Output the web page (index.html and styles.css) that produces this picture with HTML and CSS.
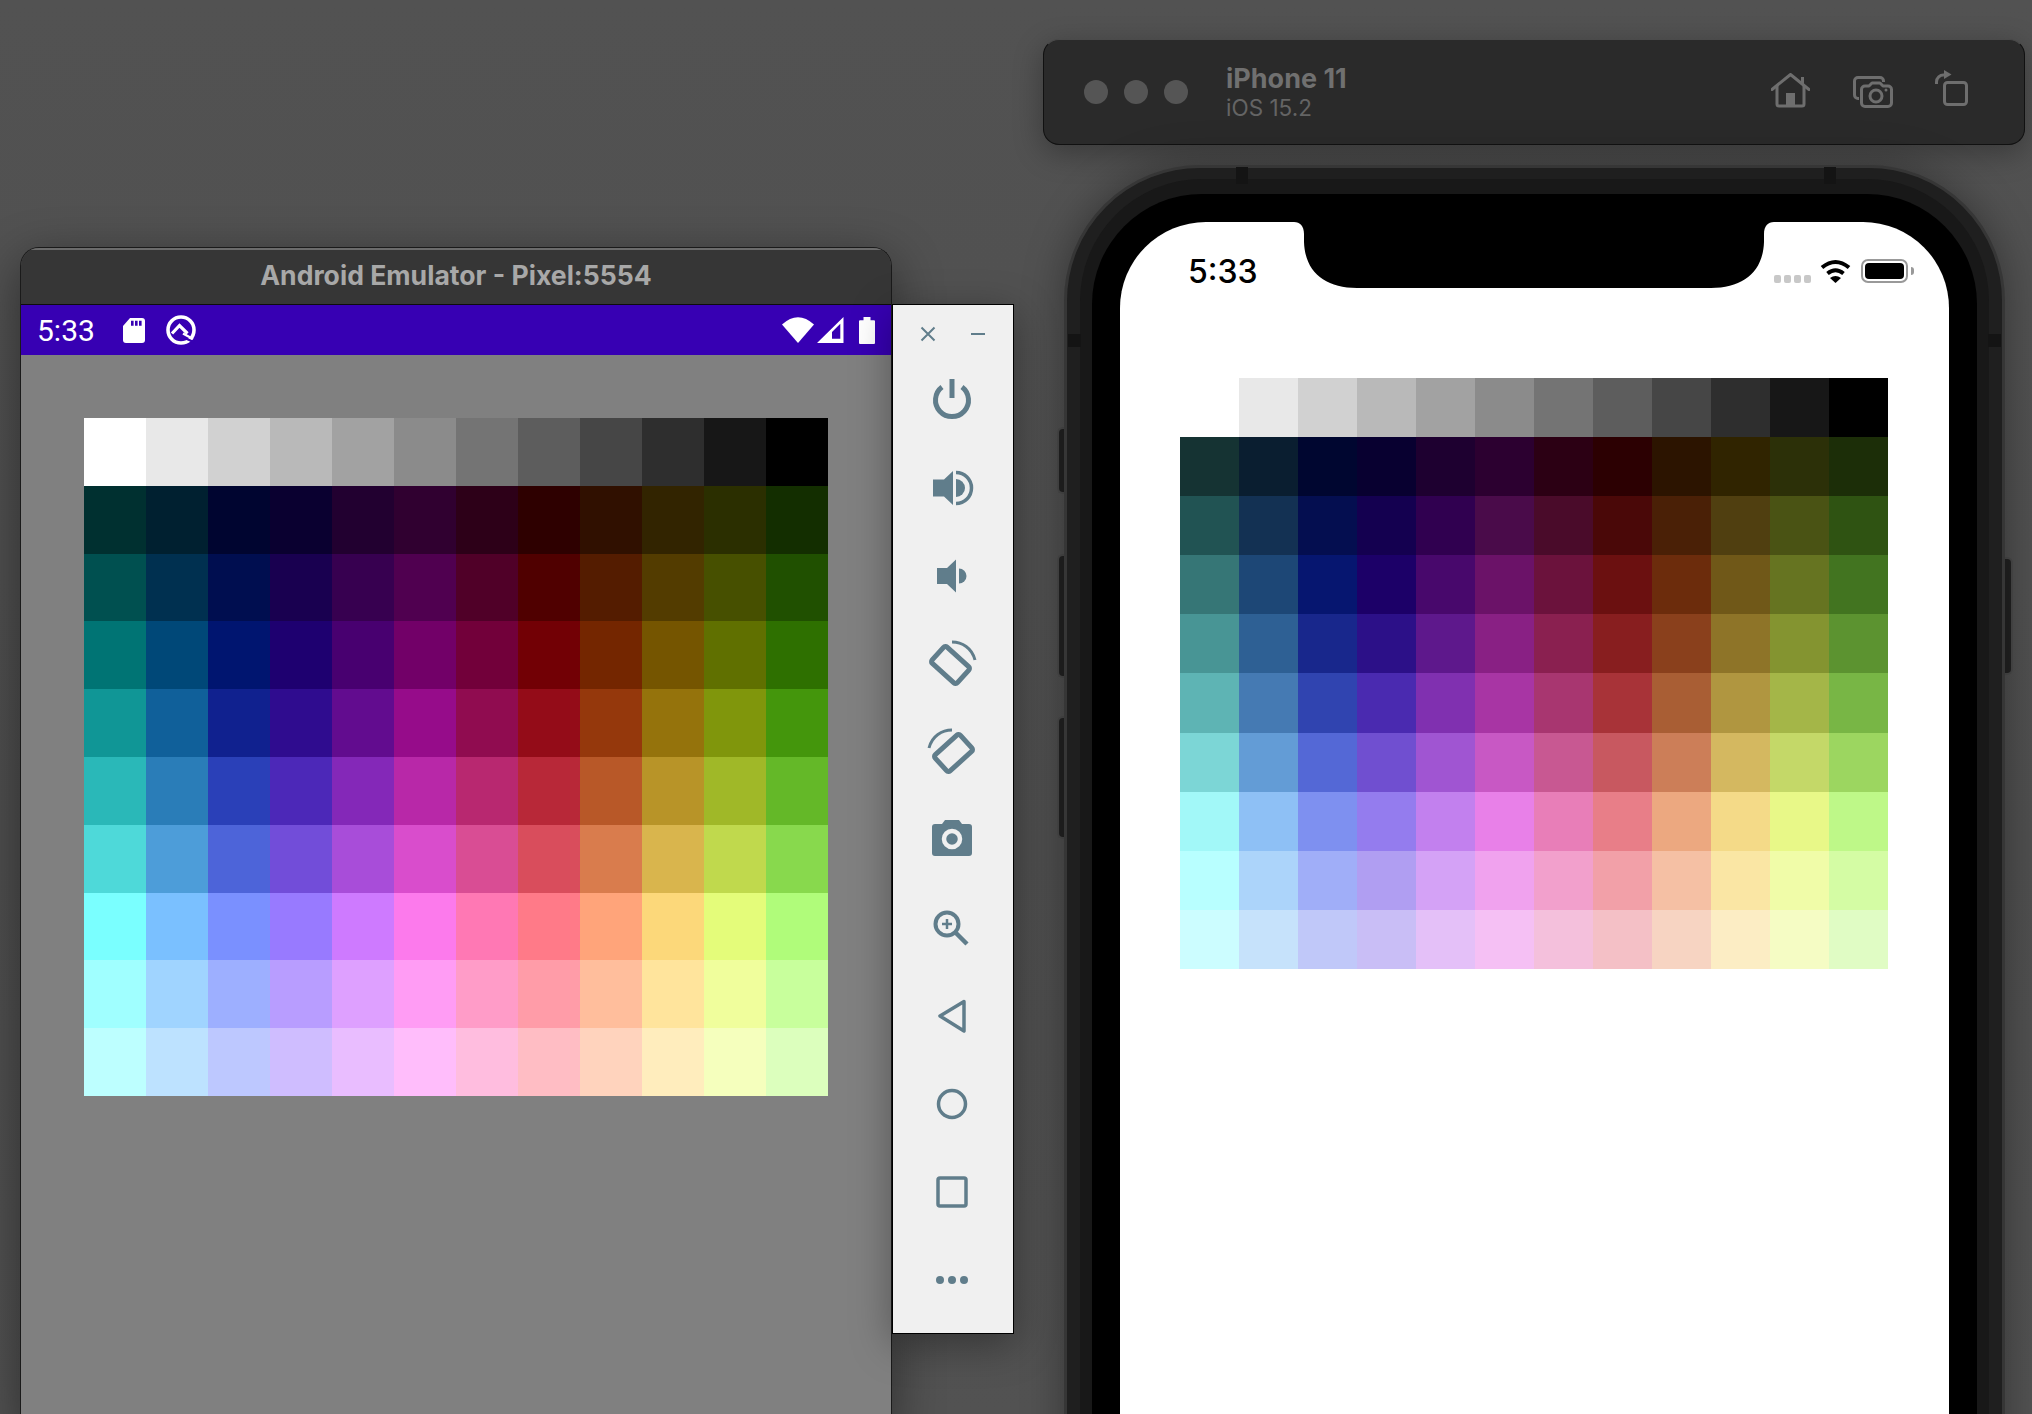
FILE: index.html
```html
<!DOCTYPE html>
<html lang="en">
<head>
  <meta charset="UTF-8">
  <meta name="viewport" content="width=device-width, initial-scale=1.0">
  <title>Android Emulator and iOS Simulator</title>
  <link rel="stylesheet" href="styles.css">
</head>
<body>

  <!-- Android emulator window -->
  <div class="android-window">
    <div class="title-bar">Android Emulator - Pixel:5554</div>
    <div class="android-status">
      <span class="android-time">5:33</span>
      <svg class="sd-icon" width="22" height="25" viewBox="0 0 22 25">
        <path fill="#fff" d="M7 0H19a3 3 0 0 1 3 3V22a3 3 0 0 1-3 3H3a3 3 0 0 1-3-3V8Z"/>
        <path fill="#3700b3" d="M8 2.7h2.6v5H8zM12 2.7h2.6v5H12zM16 2.7h2.6v5H16z"/>
      </svg>
      <svg class="q-icon" width="30" height="30" viewBox="0 0 30 30">
        <circle cx="15" cy="15" r="13" fill="none" stroke="#fff" stroke-width="3.6"/>
        <path fill="none" stroke="#fff" stroke-width="3.2" d="M6 18.5 13.5 10.5 21.5 18.5"/>
        <path fill="none" stroke="#3700b3" stroke-width="2.4" d="M14 21 30 28"/>
        <path fill="none" stroke="#fff" stroke-width="2.4" d="M17 18.5 27 24"/>
      </svg>
      <span class="status-spacer"></span>
      <svg width="32" height="26" viewBox="0 0 32 26">
        <path fill="#fff" d="M0 7.5Q16-7 32 7.5L16 26Z"/>
      </svg>
      <svg class="signal-icon" width="27" height="26" viewBox="0 0 27 26">
        <path fill="#fff" fill-rule="evenodd" d="M26.500 0V26H0ZM15 21.700H23.300V6.700L15 15Z"/>
      </svg>
      <svg class="battery-icon" width="16" height="27" viewBox="0 0 16 27">
        <path fill="#fff" d="M4.500 0h7v3.300h3.500a1 1 0 0 1 1 1V26a1 1 0 0 1-1 1H1a1 1 0 0 1-1-1V4.300a1 1 0 0 1 1-1h3.500Z"/>
      </svg>
    </div>
    <div class="android-screen">
      <div class="swatches android-swatches" id="androidSwatches"></div>
    </div>
  </div>

  <!-- Emulator side controls -->
  <div class="tool-panel">
    <div class="tool-top">
      <svg width="16" height="16" viewBox="0 0 16 16"><path class="line" stroke-width="2" d="M1.500 1.500 14.500 14.500M14.500 1.500 1.500 14.500"/></svg>
      <svg width="16" height="16" viewBox="0 0 16 16"><path class="line" stroke-width="2" d="M1 8H15"/></svg>
    </div>
    <div class="tool-btn">
      <svg class="nudge-up" width="48" height="48" viewBox="0 0 48 48">
        <path class="line" stroke-width="5" d="M14 13A16.500 16.500 0 1 0 34 13"/>
        <path class="line" stroke-width="5" d="M24 5V24"/>
      </svg>
    </div>
    <div class="tool-btn">
      <svg width="48" height="48" viewBox="0 0 48 48">
        <path class="fill" d="M5 15.500H16L25 7V41L16 32.500H5Z"/>
        <path class="fill" d="M28 15a9 9 0 0 1 0 18Z"/>
        <path class="line" stroke-width="3.500" d="M28 8.500a15.500 15.500 0 0 1 0 31"/>
      </svg>
    </div>
    <div class="tool-btn">
      <svg width="48" height="48" viewBox="0 0 48 48">
        <path class="fill" d="M9 16H19L28 7.500V40.500L19 32H9Z"/>
        <path class="fill" d="M31 16.500a7.500 7.500 0 0 1 0 15Z"/>
      </svg>
    </div>
    <div class="tool-btn">
      <svg width="52" height="52" viewBox="0 0 52 52">
        <rect class="line" x="7.500" y="16" width="34" height="22" rx="2.500" stroke-width="5" transform="rotate(42 24.500 27)"/>
        <path class="line" stroke-width="3" d="M26 4C36 4 46 10 49 22"/>
      </svg>
    </div>
    <div class="tool-btn">
      <svg class="flip" width="52" height="52" viewBox="0 0 52 52">
        <rect class="line" x="7.500" y="16" width="34" height="22" rx="2.500" stroke-width="5" transform="rotate(42 24.500 27)"/>
        <path class="line" stroke-width="3" d="M26 4C36 4 46 10 49 22"/>
      </svg>
    </div>
    <div class="tool-btn">
      <svg class="nudge-up" width="48" height="48" viewBox="0 0 48 48">
        <path class="fill" d="M7 10H14L17 6H31L34 10H41a3 3 0 0 1 3 3V39a3 3 0 0 1-3 3H7a3 3 0 0 1-3-3V13a3 3 0 0 1 3-3Z"/>
        <circle cx="24" cy="25" r="8" fill="none" stroke="#f0f0f0" stroke-width="4.500"/>
      </svg>
    </div>
    <div class="tool-btn">
      <svg width="48" height="48" viewBox="0 0 48 48">
        <circle class="line" cx="19" cy="20" r="11.500" stroke-width="4"/>
        <path class="line" stroke-width="2.500" d="M14 20H24M19 15V25"/>
        <path class="line" stroke-width="4.500" d="M28 29 39 40"/>
      </svg>
    </div>
    <div class="tool-btn">
      <svg width="48" height="48" viewBox="0 0 48 48">
        <path class="line" stroke-width="3.500" stroke-linejoin="round" d="M36 9.500 12 24 36 39Z"/>
      </svg>
    </div>
    <div class="tool-btn">
      <svg width="48" height="48" viewBox="0 0 48 48">
        <circle class="line" cx="24" cy="24" r="13.500" stroke-width="3.500"/>
      </svg>
    </div>
    <div class="tool-btn">
      <svg width="48" height="48" viewBox="0 0 48 48">
        <rect class="line" x="10" y="10" width="28" height="28" rx="2" stroke-width="3.500"/>
      </svg>
    </div>
    <div class="tool-btn">
      <svg width="48" height="48" viewBox="0 0 48 48">
        <circle class="fill" cx="12" cy="24" r="4"/>
        <circle class="fill" cx="24" cy="24" r="4"/>
        <circle class="fill" cx="36" cy="24" r="4"/>
      </svg>
    </div>
  </div>

  <!-- iOS simulator toolbar -->
  <div class="sim-toolbar">
    <div class="lights">
      <span class="light"></span>
      <span class="light"></span>
      <span class="light"></span>
    </div>
    <div class="sim-name">
      <div class="sim-device">iPhone 11</div>
      <div class="sim-os">iOS 15.2</div>
    </div>
    <svg class="home-icon" width="39" height="35" viewBox="0 0 39 35">
      <path class="sim-line" stroke-linecap="round" stroke-linejoin="round" d="M1 16.500 19.500 1.500 38 16.500"/>
      <path class="sim-line" stroke-linejoin="round" d="M6 12V31a2 2 0 0 0 2 2H31a2 2 0 0 0 2-2V12M31.500 12V4"/>
      <path fill="#6e6e6e" d="M15 20H24V33H15Z"/>
    </svg>
    <svg class="shot-icon" width="40" height="32" viewBox="0 0 40 32">
      <path class="sim-line" d="M6 22.500H5a3.500 3.500 0 0 1-3.500-3.500V5A3.500 3.500 0 0 1 5 1.500H27A3.500 3.500 0 0 1 30.500 5V6"/>
      <path class="sim-line" stroke-linejoin="round" d="M12 10H16L19 7H27L30 10H35A3.500 3.500 0 0 1 38.500 13.500V27A3.500 3.500 0 0 1 35 30.500H12A3.500 3.500 0 0 1 8.500 27V13.500A3.500 3.500 0 0 1 12 10Z"/>
      <circle class="sim-line" cx="23" cy="20" r="6"/>
      <circle fill="#6e6e6e" cx="33" cy="14" r="1.500"/>
    </svg>
    <svg class="rotate-icon" width="33" height="36" viewBox="0 0 33 36">
      <rect class="sim-line" x="9.500" y="12.500" width="22" height="22" rx="3"/>
      <path class="sim-line" d="M1.500 14V12A7 7 0 0 1 9 5"/>
      <path fill="#6e6e6e" d="M9 0 16.500 4.500 9 9Z"/>
    </svg>
  </div>

  <!-- iOS simulator phone -->
  <div class="side-btn btn-mute"></div>
  <div class="side-btn btn-vol-up"></div>
  <div class="side-btn btn-vol-down"></div>
  <div class="side-btn side-btn-right btn-power"></div>
  <div class="phone">
    <span class="antenna antenna-top-left"></span>
    <span class="antenna antenna-top-right"></span>
    <span class="antenna antenna-left"></span>
    <span class="antenna antenna-right"></span>
    <div class="phone-band">
      <div class="bezel">
        <div class="screen">
          <svg class="notch" width="488" height="66" viewBox="0 0 488 66">
            <path fill="#000" d="M4 0C10 0 14 4 14 12V20C15 50 35 66 67 66H421C453 66 473 50 474 20V12C474 4 478 0 484 0Z"/>
          </svg>
          <div class="ios-status">
            <span class="ios-time">5:33</span>
            <span class="status-spacer"></span>
            <span class="cell-dots">
              <span class="cell-dot"></span>
              <span class="cell-dot"></span>
              <span class="cell-dot"></span>
              <span class="cell-dot"></span>
            </span>
            <svg class="ios-wifi" width="31" height="24" viewBox="0 0 31 24">
              <path fill="none" stroke="#000" stroke-width="4" d="M2 8.500Q15.500-2.500 29 8.500"/>
              <path fill="none" stroke="#000" stroke-width="4" d="M7.500 14.500Q15.500 8 23.500 14.500"/>
              <path fill="#000" d="M10 19Q15.500 15 21 19L15.500 24Z"/>
            </svg>
            <span class="ios-battery"><span class="ios-charge"></span></span>
            <span class="ios-nub"></span>
          </div>
          <div class="swatches ios-swatches" id="iosSwatches"></div>
        </div>
      </div>
    </div>
  </div>

  <script src="palette.js"></script>
</body>
</html>
```

FILE: styles.css
```css
html, body {
  height: 100%;
}
body {
  margin: 0;
  overflow: hidden;
  position: relative;
  background: linear-gradient(180deg, #525252 0%, #4f4f4f 60%, #525252 100%);
  font-family: Inter, "Liberation Sans", sans-serif;
}

/* shared swatch grid */
.swatches {
  display: grid;
  grid-template-columns: repeat(12, 1fr);
}
.swatch {
  min-width: 0;
}

/* android window */
.android-window {
  position: absolute;
  left: 20px;
  top: 247px;
  width: 872px;
  height: 1180px;
  box-sizing: border-box;
  display: flex;
  flex-direction: column;
  border-radius: 19px 19px 0 0;
  border: 1px solid #1a1a1a;
  border-bottom: none;
  box-shadow: 0 14px 50px rgba(0, 0, 0, 0.45);
  overflow: hidden;
}
.title-bar {
  height: 57px;
  flex-shrink: 0;
  box-sizing: border-box;
  background-color: #363636;
  border-top: 2px solid #6b6b6b;
  border-bottom: 1px solid #0d0d0d;
  color: #a8a8a8;
  font-size: 26.6px;
  font-weight: 700;
  line-height: 50px;
  text-align: center;
}
.android-status {
  height: 50px;
  flex-shrink: 0;
  display: flex;
  align-items: center;
  background-color: #3700b3;
  padding: 0 16px 0 16px;
  color: #fff;
}
.android-time {
  font-family: Roboto, sans-serif;
  font-size: 30px;
  width: 86px;
}
.q-icon {
  margin-left: 21px;
}
.signal-icon {
  margin-left: 3px;
}
.battery-icon {
  margin-left: 15px;
}
.status-spacer {
  flex: 1;
}
.android-screen {
  flex: 1;
  background-color: #808080;
  padding: 63px 63px 0 62.5px;
}
.android-swatches {
  width: 745px;
  grid-auto-rows: 67.8px;
}

/* emulator side panel */
.tool-panel {
  position: absolute;
  left: 892px;
  top: 304px;
  width: 122px;
  height: 1030px;
  box-sizing: border-box;
  border: 1px solid #000;
  background-color: #f0f0f0;
  box-shadow: 0 10px 40px rgba(0, 0, 0, 0.35);
}
.tool-top {
  display: flex;
  justify-content: space-between;
  padding: 21px 27px 0 27px;
  height: 30px;
}
.tool-btn {
  height: 88px;
  display: flex;
  align-items: center;
  justify-content: center;
  padding-right: 2px;
}
.line {
  fill: none;
  stroke: #607d8b;
}
.fill {
  fill: #607d8b;
}
.flip {
  transform: scaleX(-1);
}
.nudge-up {
  transform: translateY(-2px);
}

/* simulator toolbar */
.sim-toolbar {
  position: absolute;
  left: 1043px;
  top: 39px;
  width: 982px;
  height: 106px;
  box-sizing: border-box;
  display: flex;
  align-items: center;
  padding-left: 40px;
  background-color: #2a2a2a;
  border: 1px solid #111;
  border-top-color: #4a4a4a;
  border-radius: 16px;
  box-shadow: 0 8px 30px rgba(0, 0, 0, 0.3);
}
.lights {
  display: flex;
  gap: 16px;
}
.light {
  width: 24px;
  height: 24px;
  border-radius: 50%;
  background-color: #555;
}
.sim-name {
  margin-left: 38px;
  margin-top: 2px;
  flex: 1;
}
.sim-device {
  color: #707070;
  font-size: 27px;
  font-weight: 700;
  line-height: 30px;
}
.sim-os {
  color: #646464;
  font-size: 22.5px;
  line-height: 28px;
}
.sim-line {
  fill: none;
  stroke: #6e6e6e;
  stroke-width: 3;
}
.home-icon {
  margin-bottom: 3px;
}
.shot-icon {
  margin-left: 43px;
  margin-bottom: 1px;
}
.rotate-icon {
  margin-left: 42px;
  margin-right: 56px;
  margin-bottom: 8px;
}

/* phone */
.phone {
  position: absolute;
  left: 1064px;
  top: 165px;
  width: 941px;
  height: 1400px;
  box-sizing: border-box;
  border: 3px solid #363636;
  border-radius: 136px;
  background-color: #1f1f1f;
  padding: 11px 13px;
  box-shadow: 0 0 40px rgba(0, 0, 0, 0.35);
}
.phone-band {
  height: 100%;
  box-sizing: border-box;
  background-color: #181818;
  border-radius: 122px;
  padding: 15px 12px;
}
.bezel {
  height: 100%;
  box-sizing: border-box;
  background-color: #000;
  border-radius: 110px;
  padding: 28px 28px;
}
.screen {
  position: relative;
  height: 100%;
  background-color: #fff;
  border-radius: 86px;
}
.notch {
  position: absolute;
  left: 170px;
  top: 0;
}
.ios-status {
  display: flex;
  align-items: center;
  height: 24px;
  padding: 37px 35px 0 68px;
}
.ios-time {
  font-size: 32px;
  font-weight: 500;
  color: #000;
}
.cell-dots {
  display: flex;
  gap: 3px;
  margin-top: 16px;
}
.cell-dot {
  width: 7px;
  height: 8px;
  border-radius: 2px;
  background-color: #c8c8c8;
}
.ios-wifi {
  margin-left: 9px;
}
.ios-battery {
  width: 47px;
  height: 24px;
  box-sizing: border-box;
  margin-left: 10px;
  border: 2px solid #999;
  border-radius: 7px;
  padding: 2px;
  display: flex;
}
.ios-charge {
  flex: 1;
  background-color: #000;
  border-radius: 4px;
}
.ios-nub {
  width: 3px;
  height: 8px;
  margin-left: 3px;
  background-color: #999;
  border-radius: 0 3px 3px 0;
}
.ios-swatches {
  width: 708px;
  margin: 95px 0 0 60px;
  grid-auto-rows: 59.1px;
}

/* phone hardware details */
.antenna {
  position: absolute;
  background-color: #141414;
  z-index: 1;
}
.antenna-top-left {
  left: 169px;
  top: -1px;
  width: 12px;
  height: 17px;
}
.antenna-top-right {
  right: 166px;
  top: -1px;
  width: 12px;
  height: 17px;
}
.antenna-left {
  left: 1px;
  top: 166px;
  width: 13px;
  height: 13px;
}
.antenna-right {
  right: 1px;
  top: 166px;
  width: 13px;
  height: 13px;
}
.side-btn {
  position: absolute;
  left: 1057px;
  width: 10px;
  box-sizing: border-box;
  background-color: #222;
  border: 2px solid #4a4a4a;
  border-right: none;
  border-radius: 6px 0 0 6px;
}
.side-btn-right {
  left: 2003px;
  border: 2px solid #4a4a4a;
  border-left: none;
  border-radius: 0 6px 6px 0;
}
.btn-mute {
  top: 427px;
  height: 67px;
}
.btn-vol-up {
  top: 554px;
  height: 124px;
}
.btn-vol-down {
  top: 716px;
  height: 123px;
}
.btn-power {
  top: 557px;
  height: 118px;
}
```

FILE: palette.js
```js
// Grays are the same on both platforms, the rest differ a bit per platform
const grays = ['#ffffff', '#e8e8e8', '#d1d1d1', '#b9b9b9', '#a2a2a2', '#8b8b8b', '#747474', '#5d5d5d', '#464646', '#2e2e2e', '#171717', '#000000'];

const androidRows = [
  grays,
  ['#003030', '#002030', '#000530', '#0a0030', '#220030', '#300030', '#2d0018', '#2e0000', '#301000', '#322400', '#2b2f00', '#132e00'],
  ['#005050', '#003050', '#000e50', '#190050', '#370050', '#500050', '#500028', '#500000', '#541c00', '#533c00', '#475000', '#205000'],
  ['#007474', '#004878', '#001570', '#1e0070', '#480070', '#720068', '#72003a', '#720005', '#742600', '#755500', '#607000', '#2e7000'],
  ['#109696', '#10609a', '#10218f', '#2f0c8f', '#620c8f', '#960c8a', '#900c50', '#940c18', '#95380c', '#95730c', '#80960c', '#44960c'],
  ['#2ab8b8', '#2a7db8', '#2a40b8', '#4c28b8', '#8428b8', '#b828a8', '#b82870', '#b82838', '#b85828', '#b89428', '#a0b828', '#64b828'],
  ['#4ed9d9', '#4d9dd9', '#4d64d9', '#724dd9', '#a84dd9', '#d94dcc', '#d94d94', '#d94d5c', '#d97c4d', '#d9b54d', '#c0d94d', '#88d94d'],
  ['#7affff', '#7ac0ff', '#7a90ff', '#987aff', '#ce7aff', '#fc7aec', '#ff78b4', '#ff7a88', '#ffa47a', '#fcd87a', '#e4fc7a', '#b0fc7a'],
  ['#a0ffff', '#a0d4ff', '#9dafff', '#b89dff', '#dea0ff', '#ff9cf4', '#ff9cc8', '#ff9ca8', '#ffbe9c', '#ffe49c', '#f0fe9c', '#c8ff9c'],
  ['#bdffff', '#bde2ff', '#bdc8ff', '#cfbdff', '#e9bdff', '#ffbdfb', '#ffbddf', '#ffbdc4', '#ffd3bd', '#ffedbd', '#f5ffbd', '#dcffbd']
];

const iosRows = [
  grays,
  ['#153333', '#0a1e30', '#000630', '#080030', '#1e0030', '#2c0030', '#2c0014', '#2c0002', '#2c1400', '#302400', '#2c3008', '#1c2e08'],
  ['#215353', '#133153', '#040e50', '#140050', '#300050', '#4a0b4a', '#4a0b2a', '#4a0808', '#4a2006', '#503f10', '#4a5314', '#2f5312'],
  ['#367676', '#1d4776', '#061670', '#1c0068', '#48086c', '#6b1268', '#6b123c', '#6b1010', '#6c2c0c', '#705818', '#667421', '#427420'],
  ['#489595', '#2e6094', '#18278c', '#2c1088', '#5e188c', '#892084', '#8a2050', '#881e1f', '#8a401c', '#8e7428', '#849430', '#5c9330'],
  ['#5eb4b4', '#457ab3', '#3044b0', '#4a2ab0', '#8030b0', '#a835a4', '#a83670', '#a83338', '#a95e34', '#b09640', '#a4b648', '#78b645'],
  ['#7cd6d6', '#639cd6', '#5468d6', '#704fd0', '#a055d2', '#c858c4', '#c85892', '#c85860', '#cc7e58', '#d4b860', '#c4d868', '#9cd660'],
  ['#a2f8f8', '#8ec0f5', '#7e90f0', '#947cee', '#c280ee', '#e880e8', '#e87eb8', '#e87e88', '#eca880', '#f4da88', '#e8f888', '#bef888'],
  ['#b8ffff', '#acd4fa', '#a0aef8', '#b09ef2', '#d4a2f6', '#f0a2ee', '#f2a0cc', '#f2a0a8', '#f5c0a4', '#fae6a4', '#f0fca8', '#d4fca4'],
  ['#ccfdff', '#c6e2fb', '#c0c8f9', '#c9bef6', '#e4c0f8', '#f5c0f4', '#f4c0dc', '#f4c0c6', '#f7d4c2', '#fcedc4', '#f5fcc4', '#e0fcc4']
];

function fillSwatches(id, rows) {
  const grid = document.getElementById(id);
  rows.forEach((row) => {
    row.forEach((color) => {
      const cell = document.createElement('div');
      cell.className = 'swatch';
      cell.style.backgroundColor = color;
      grid.appendChild(cell);
    });
  });
}

fillSwatches('androidSwatches', androidRows);
fillSwatches('iosSwatches', iosRows);
```
